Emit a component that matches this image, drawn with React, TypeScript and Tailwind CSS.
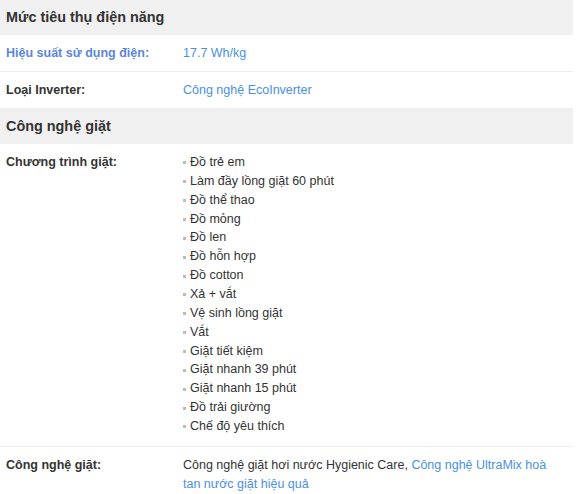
const programs = [
  "Đồ trẻ em",
  "Làm đầy lồng giặt 60 phút",
  "Đồ thể thao",
  "Đồ mỏng",
  "Đồ len",
  "Đồ hỗn hợp",
  "Đồ cotton",
  "Xả + vắt",
  "Vệ sinh lồng giặt",
  "Vắt",
  "Giặt tiết kiệm",
  "Giặt nhanh 39 phút",
  "Giặt nhanh 15 phút",
  "Đồ trải giường",
  "Chế độ yêu thích",
];

const SectionHead = ({ title }: { title: string }) => (
  <div className="h-[35px] bg-[#f0f0f0] px-[6px] flex items-center text-[14.4px] font-bold text-[#333]">
    {title}
  </div>
);

const Row = ({
  label,
  children,
  labelClass = "text-[#333]",
  border = true,
  pad = "pt-[9px] pb-[8px]",
}: {
  label: string;
  children: React.ReactNode;
  labelClass?: string;
  border?: boolean;
  pad?: string;
}) => (
  <div className={`flex ${pad} leading-[19px] text-[12.5px] ${border ? "border-b border-[#eeeeee]" : ""}`}>
    <div className={`w-[183px] shrink-0 pl-[6px] font-bold ${labelClass}`}>{label}</div>
    <div className="w-[375px] text-[#333]">{children}</div>
  </div>
);

export default function App() {
  return (
    <div className="w-[573px] bg-white font-['Liberation_Sans',Arial,sans-serif]">
      <SectionHead title="Mức tiêu thụ điện năng" />
      <Row label="Hiệu suất sử dụng điện:" labelClass="text-[#5b86dc]">
        <span className="text-[#4a90e2]">17.7 Wh/kg</span>
      </Row>
      <Row label="Loại Inverter:">
        <span className="text-[#4a90e2]">Công nghệ EcoInverter</span>
      </Row>
      <SectionHead title="Công nghệ giặt" />
      <Row label="Chương trình giặt:" pad="pt-[9px] pb-[10px]">
        <ul className="leading-[18.86px]">
          {programs.map((p) => (
            <li key={p} className="flex items-center">
              <span className="w-[3px] h-[3px] bg-[#bbbbbb] mr-[4px] mt-[1px]" />
              {p}
            </li>
          ))}
        </ul>
      </Row>
      <Row label="Công nghệ giặt:" border={false}>
        Công nghệ giặt hơi nước Hygienic Care,{" "}
        <span className="text-[#4a90e2]">Công nghệ UltraMix hoà tan nước giặt hiệu quả</span>
      </Row>
    </div>
  );
}
